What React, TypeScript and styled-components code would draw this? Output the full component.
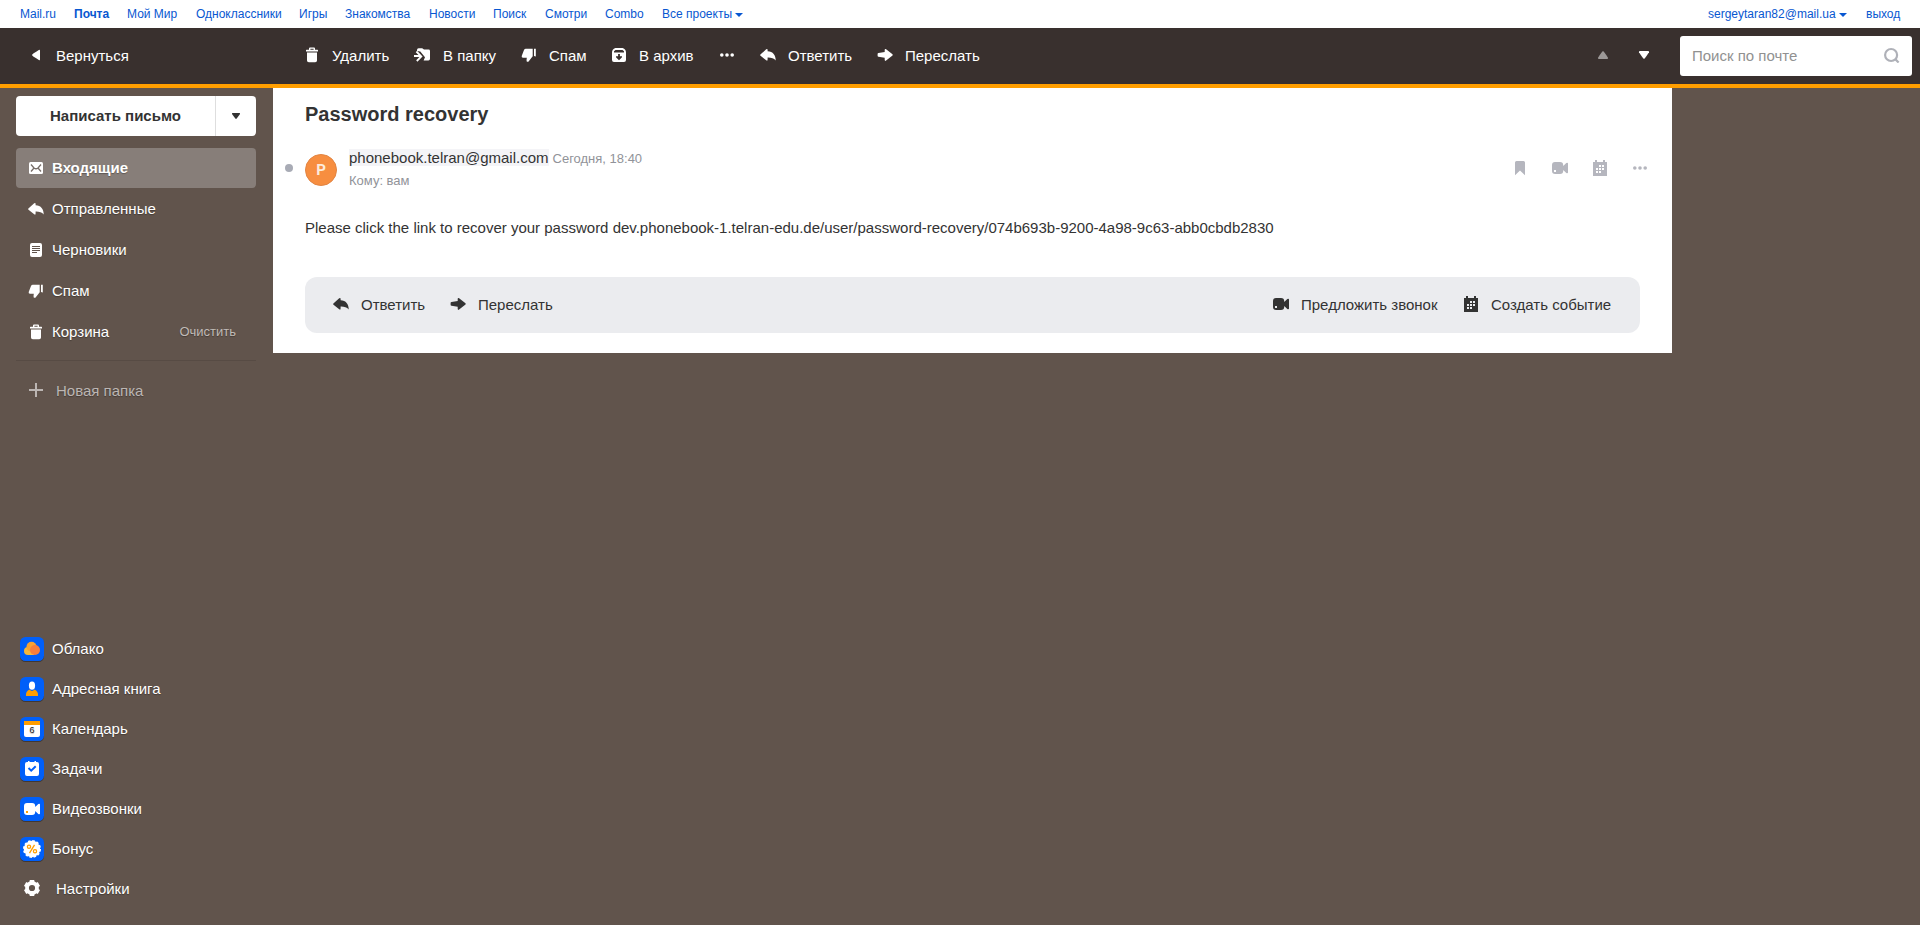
import React from 'react';
import styled, { createGlobalStyle } from 'styled-components';

const Global = createGlobalStyle`
  * { box-sizing: border-box; }
  body {
    margin: 0;
    background: #61544c;
    font-family: "Liberation Sans", Arial, sans-serif;
    font-size: 15px;
    color: #333;
    overflow: hidden;
  }
  svg { display: block; flex: none; }
`;

const Page = styled.div`
  display: flex;
  flex-direction: column;
  height: 925px;
`;

const PortalBar = styled.nav`
  display: flex;
  height: 28px;
  padding: 0 20px;
  background: #fff;
  font-size: 12px;
  line-height: 28px;
  color: #0857d1;
`;

const PortalLink = styled.a<{ $w: number; $bold?: boolean }>`
  display: flex;
  align-items: center;
  width: ${p => p.$w}px;
  flex: none;
  white-space: nowrap;
  font-weight: ${p => (p.$bold ? 700 : 400)};
`;

const Caret = styled.i`
  margin: 2px 0 0 3px;
  border: solid transparent;
  border-width: 4px 4px 0;
  border-top-color: #0857d1;
`;

const Spacer = styled.div`
  flex: 1;
`;

const Toolbar = styled.header`
  display: flex;
  align-items: center;
  height: 60px;
  padding: 0 8px 0 28px;
  background: #39302e;
  border-bottom: 4px solid #ff9e00;
  color: #fff;
`;

const ToolButton = styled.div<{ $w: number; $gap?: number; $dim?: boolean }>`
  display: flex;
  align-items: center;
  gap: ${p => p.$gap ?? 12}px;
  width: ${p => p.$w}px;
  height: 40px;
  padding-bottom: 1px;
  flex: none;
  white-space: nowrap;
  line-height: 17px;
  opacity: ${p => (p.$dim ? 0.5 : 1)};
  svg { margin-top: -1px; }
`;

const Search = styled.div`
  display: flex;
  align-items: center;
  justify-content: space-between;
  width: 232px;
  height: 40px;
  padding: 0 12px 1px;
  border-radius: 3px;
  background: #fff;
  line-height: 17px;
  color: #919191;
  svg { margin-top: -1px; }
`;

const Main = styled.div`
  display: flex;
  flex: 1;
  align-items: stretch;
`;

const Sidebar = styled.aside`
  display: flex;
  flex-direction: column;
  width: 273px;
  padding: 8px 17px 17px 16px;
  color: #fff;
`;

const Label = styled.span<{ $low?: boolean }>`
  margin-top: ${p => (p.$low ? 1 : -1)}px;
  line-height: 17px;
  white-space: nowrap;
`;

const Compose = styled.div`
  display: flex;
  height: 40px;
  margin-bottom: 12px;
  border-radius: 4px;
  background: #fff;
  color: #333;
  font-weight: 700;
`;

const ComposeLabel = styled.div`
  display: flex;
  align-items: center;
  justify-content: center;
  width: 200px;
  border-right: 1px solid #dedede;
`;

const ComposeMore = styled.div`
  display: flex;
  flex: 1;
  align-items: center;
  justify-content: center;
`;

const Folder = styled.div<{ $active?: boolean }>`
  display: flex;
  align-items: center;
  gap: 8px;
  height: 40px;
  margin-bottom: 1px;
  padding: 0 20px 0 12px;
  border-radius: 4px;
  background: ${p => (p.$active ? '#877e79' : 'transparent')};
  font-weight: ${p => (p.$active ? 700 : 400)};
  text-shadow: 0 1px 1px rgba(0, 0, 0, 0.3);
`;

const Clear = styled(Label)`
  margin-left: auto;
  font-size: 13px;
  line-height: 15px;
  color: #c0bbb7;
`;

const Divider = styled.div`
  height: 1px;
  margin: 7px 0 9px;
  background: #574b44;
`;

const NewFolder = styled(Folder)`
  gap: 12px;
  color: #bcb6b3;
`;

const AppLink = styled.div<{ $gap?: number }>`
  display: flex;
  align-items: center;
  gap: ${p => p.$gap ?? 8}px;
  height: 40px;
  padding-left: 4px;
  text-shadow: 0 1px 1px rgba(0, 0, 0, 0.3);
`;

const TileSvg = styled.svg`
  margin-top: 3px;
`;

const Letter = styled.article`
  display: flex;
  flex-direction: column;
  width: 1399px;
  height: 265px;
  padding: 14px 32px 20px;
  background: #fff;
`;

const Subject = styled.h1`
  margin: 0;
  font-size: 20px;
  line-height: 24px;
`;

const LetterHead = styled.div`
  display: flex;
  height: 62px;
  margin: 16px 0 0 -20px;
`;

const Unread = styled.i`
  width: 8px;
  height: 8px;
  margin: 22px 12px 0 0;
  border-radius: 50%;
  background: #a8abb5;
`;

const Avatar = styled.div`
  display: flex;
  align-items: center;
  justify-content: center;
  width: 32px;
  height: 32px;
  margin: 12px 12px 0 0;
  border: 1px solid #e28543;
  border-radius: 50%;
  background: #f78e40;
  color: #fdebdc;
  font: 700 15px Roboto, "Liberation Sans", sans-serif;
`;

const Meta = styled.div`
  padding-top: 6px;
  font-size: 13px;
  line-height: 20px;
  color: #919399;
  white-space: nowrap;
`;

const Sender = styled.span`
  margin-right: 4px;
  background: #f4f4f7;
  font-size: 15px;
  color: #333;
`;

const Recipient = styled.div`
  margin-top: 2px;
`;

const LetterActions = styled.div`
  display: flex;
  gap: 24px;
  margin: 18px -8px 0 auto;
  height: 16px;
  color: #b5b6be;
`;

const LetterText = styled.p`
  margin: 13px 0 38px;
  line-height: 22px;
`;

const ReplyBar = styled.footer`
  display: flex;
  align-items: center;
  height: 56px;
  flex: none;
  padding: 0 28px;
  border-radius: 12px;
  background: #ebecef;
`;

const Icon = ({ children }: { children: React.ReactNode }) => (
  <svg width="16" height="16" viewBox="0 0 16 16" fill="currentColor">{children}</svg>
);

const TrashIcon = () => (
  <Icon>
    <path d="M2 3.3Q2 2.8 2.5 2.8H5V1.6Q5 .5 6 .5H10Q11 .5 11 1.6V2.8H13.5Q14 2.8 14 3.3V4.6H2ZM6.4 2.8H9.6V1.8H6.4ZM3 5.4H13V13.5Q13 15.3 11.2 15.3H4.8Q3 15.3 3 13.5Z" />
  </Icon>
);
const ReplyIcon = () => (
  <Icon>
    <path d="M.4 7.6 6.2 2.3Q7.6 1.3 7.6 3V4.3C13 4.6 15.7 8 15.7 13.6 13.8 11.2 11 10.5 7.6 10.6V12.6Q7.6 14.4 6.2 13.2L.5 8.8Q-.1 8.2.4 7.6Z" />
  </Icon>
);
const ForwardIcon = () => (
  <Icon>
    <path d="M.6 7Q.6 6.1 1.5 6L7.7 5V3Q7.7 1.3 9.1 2.3L15.5 7.3Q16 7.9 15.5 8.6L9.1 13.6Q7.7 14.6 7.7 12.8V10.8L1.5 9.8Q.6 9.7.6 8.8Z" />
  </Icon>
);
const MoveIcon = () => (
  <Icon>
    <path d="M3 4V3Q3 1.2 4.6 1.2H8.2L10 2.6H14.6Q16 2.6 16 4V11.8Q16 13.4 14.4 13.4H9.6L11 10.2 6.3 4.5Z" />
    <path d="M0 9H6M2.4 4.5 7.3 9.5 2.8 14" fill="none" stroke="currentColor" strokeWidth="1.8" />
  </Icon>
);
const SpamIcon = () => (
  <Icon>
    <path d="M4.8 1.8H11.7V9.3L7.8 14.2Q7 15.2 5.7 14.4 5.4 13 5.8 10.7H2Q.3 10.6.7 8.9L2.9 3.2Q3.5 1.8 4.8 1.8ZM13 1.8H14.8V9.5L13 9Z" />
  </Icon>
);
const ArchiveIcon = () => (
  <Icon>
    <path fillRule="evenodd" d="M4.4 1H11.6Q15 2.4 15 5.5V13Q15 15 13 15H3Q1 15 1 13V5.5Q1 2.4 4.4 1ZM3 4.3V5.5H13V4.3L11.5 3.1H4.5ZM7.1 7.1V9.2H5V10.2L8 13.2 11 10.2V9.2H8.9V7.1Z" />
  </Icon>
);
const DotsIcon = () => (
  <Icon>
    <circle cx="2.8" cy="8" r="1.8" /><circle cx="8" cy="8" r="1.8" /><circle cx="13.2" cy="8" r="1.8" />
  </Icon>
);
const InboxIcon = () => (
  <Icon>
    <rect x="1" y="2" width="14" height="12" rx="1.5" />
    <path d="M3 4.5 6 8Q8 9.5 10 8L13 4.5M3 11.5 6 8M13 11.5 10 8" fill="none" stroke="#776e69" strokeWidth="1.3" />
  </Icon>
);
const DraftIcon = () => (
  <Icon>
    <path fillRule="evenodd" d="M4 1H12Q14 1 14 3V13Q14 15 12 15H4Q2 15 2 13V3Q2 1 4 1ZM4 4V5H12V4ZM4 6V7H12V6ZM4 8V9H12V8ZM4 10V11H9V10Z" />
  </Icon>
);
const PlusIcon = () => <Icon><path d="M7 1H9V7H15V9H9V15H7V9H1V7H7Z" /></Icon>;
const BookmarkIcon = () => <Icon><path d="M3 2.5Q3 1 4.5 1H11.5Q13 1 13 2.5V15.3L8 10.6 3 15.3Z" /></Icon>;
const VideoIcon = () => (
  <Icon>
    <path fillRule="evenodd" d="M3 2H8Q11.2 2 11.2 5.2V6L14.3 2.9Q16 2.3 16 3.5V12.5Q16 13.7 14.3 13.1L11.2 10V11Q11.2 14 8 14H3.2Q0 14 0 10.8V5Q0 2 3 2ZM2 10V12H4V10Z" />
  </Icon>
);
const CalendarIcon = () => (
  <Icon>
    <path fillRule="evenodd" d="M1 2H3V0H5V2H11V0H13V2H15V16H1ZM7 5V7H9V5ZM10 5V7H12V5ZM4 8V10H6V8ZM7 8V10H9V8ZM10 8V10H12V8ZM4 11V13H6V11ZM7 11V13H9V11Z" />
  </Icon>
);
const SearchIcon = () => (
  <Icon>
    <g fill="none" stroke="#afb1b8" strokeWidth="2.2"><circle cx="7.1" cy="8" r="6" /><path d="m11 11.9 3.6 3.6" /></g>
  </Icon>
);
const BackIcon = () => <Icon><path d="M3.9 8Q3.9 7.2 10.8 3 12 2.4 12 3.5V12.5Q12 13.6 10.8 13 3.9 8.8 3.9 8Z" /></Icon>;
const UpIcon = () => <Icon><path d="M8 4Q8.7 4 13 10.7 13.3 12 12 12H4Q2.7 12 3 10.7 7.3 4 8 4Z" /></Icon>;
const DownIcon = () => <Icon><path d="M8 12Q8.7 12 13 5.3 13.3 4 12 4H4Q2.7 4 3 5.3 7.3 12 8 12Z" /></Icon>;
const SmallDownIcon = () => <Icon><path d="M8 11Q8.5 11 12 6 12.3 5 11.4 5H4.6Q3.7 5 4 6 7.5 11 8 11Z" /></Icon>;

const Tile = ({ children }: { children: React.ReactNode }) => (
  <TileSvg width="24" height="25" viewBox="0 0 24 25">
    <rect y="1" width="24" height="24" rx="5.5" fill="#413833" />
    <rect width="24" height="24" rx="5.5" fill="#005ff9" />
    {children}
  </TileSvg>
);

const apps = [
  ['Облако', <>
    <circle cx="8" cy="14" r="4" fill="#f5b73b" /><rect x="8" y="11" width="6" height="7" fill="#f5b73b" />
    <circle cx="11.5" cy="9.7" r="5" fill="#f7a233" /><circle cx="15" cy="13" r="5" fill="#f77e3b" />
  </>],
  ['Адресная книга', <>
    <ellipse cx="12" cy="8.7" rx="3.1" ry="4.1" fill="#fff" /><path d="M6 19V17.4Q6 14.5 9.4 12.6 12 15.4 14.6 12.6 18 14.5 18 17.4V19Z" fill="#ff9e00" />
  </>],
  ['Календарь', <>
    <path d="M4 8H20V18Q20 20 18 20H6Q4 20 4 18Z" fill="#fff" /><path d="M4 4H20V8H4Z" fill="#ff9e00" />
    <text x="12" y="16" textAnchor="middle" fontSize="9" fill="#222">6</text>
  </>],
  ['Задачи', <>
    <path d="M7 5H8V4H9.5V5H14.5V4H16V5H17Q19 5 19 7V17Q19 19 17 19H7Q5 19 5 17V7Q5 5 7 5Z" fill="#fff" />
    <path d="m8.5 11 2.7 2.6 4.5-4.3" fill="none" stroke="#005ff9" strokeWidth="2" />
  </>],
  ['Видеозвонки', <>
    <path d="M7 6H12Q15.2 6 15.2 9V10L18.3 6.9Q20 6.3 20 7.5V16.5Q20 17.7 18.3 17.1L15.2 14V15Q15.2 18 12 18H7.2Q4 18 4 14.8V9Q4 6 7 6Z" fill="#fff" />
    <rect x="6" y="14" width="2" height="2" fill="#ff9e00" />
  </>],
  ['Бонус', <>
    <circle cx="12" cy="12" r="8.2" fill="#fff" /><circle cx="12" cy="12" r="8" fill="none" stroke="#fff" strokeWidth="2" strokeDasharray="2.5 1.689" />
    <g fill="none" stroke="#ff9e00" strokeWidth="1.3"><circle cx="9" cy="9.7" r="1.6" /><circle cx="15" cy="14.3" r="1.6" /><path d="m14.5 7.8-5 8.4" /></g>
  </>],
] as [string, React.ReactNode][];

const GearIcon = () => (
  <svg width="24" height="24" viewBox="0 0 24 24">
    <g fill="none" stroke="#fff"><circle cx="12" cy="12" r="5" strokeWidth="3.8" />
      <path d="M12 4V7M12 17V20M5.1 8 7.7 9.5M16.3 14.5 18.9 16M5.1 16 7.7 14.5M16.3 9.5 18.9 8" strokeWidth="4.6" /></g>
  </svg>
);

const portal: [string, number][] = [
  ['Mail.ru', 54], ['Почта', 53], ['Мой Мир', 69], ['Одноклассники', 103], ['Игры', 46], ['Знакомства', 84],
  ['Новости', 64], ['Поиск', 52], ['Смотри', 60], ['Combo', 57],
];

export default function App() {
  return (
    <Page>
      <Global />
      <PortalBar>
        {portal.map(([t, w]) => <PortalLink key={t} $w={w} $bold={t === 'Почта'}>{t}</PortalLink>)}
        <PortalLink $w={90}>Все проекты<Caret /></PortalLink>
        <Spacer />
        <PortalLink $w={158}>sergeytaran82@mail.ua<Caret /></PortalLink>
        <PortalLink $w={34}>выход</PortalLink>
      </PortalBar>
      <Toolbar>
        <ToolButton $w={276}><BackIcon />Вернуться</ToolButton>
        <ToolButton $w={110}><TrashIcon />Удалить</ToolButton>
        <ToolButton $w={107} $gap={13}><MoveIcon />В папку</ToolButton>
        <ToolButton $w={90}><SpamIcon />Спам</ToolButton>
        <ToolButton $w={108}><ArchiveIcon />В архив</ToolButton>
        <ToolButton $w={41}><DotsIcon /></ToolButton>
        <ToolButton $w={117}><ReplyIcon />Ответить</ToolButton>
        <ToolButton $w={110}><ForwardIcon />Переслать</ToolButton>
        <Spacer />
        <ToolButton $w={41} $dim><UpIcon /></ToolButton>
        <ToolButton $w={44}><DownIcon /></ToolButton>
        <Search>Поиск по почте<SearchIcon /></Search>
      </Toolbar>
      <Main>
        <Sidebar>
          <Compose>
            <ComposeLabel><Label>Написать письмо</Label></ComposeLabel>
            <ComposeMore><SmallDownIcon /></ComposeMore>
          </Compose>
          <Folder $active><InboxIcon /><Label>Входящие</Label></Folder>
          <Folder><ReplyIcon /><Label>Отправленные</Label></Folder>
          <Folder><DraftIcon /><Label>Черновики</Label></Folder>
          <Folder><SpamIcon /><Label>Спам</Label></Folder>
          <Folder><TrashIcon /><Label>Корзина</Label><Clear>Очистить</Clear></Folder>
          <Divider />
          <NewFolder><PlusIcon /><Label $low>Новая папка</Label></NewFolder>
          <Spacer />
          {apps.map(([name, art]) => <AppLink key={name}><Tile>{art}</Tile><Label $low>{name}</Label></AppLink>)}
          <AppLink $gap={12}><GearIcon /><Label $low>Настройки</Label></AppLink>
        </Sidebar>
        <Letter>
          <Subject>Password recovery</Subject>
          <LetterHead>
            <Unread />
            <Avatar>P</Avatar>
            <Meta>
              <Sender>phonebook.telran@gmail.com</Sender>Сегодня, 18:40
              <Recipient>Кому: вам</Recipient>
            </Meta>
            <LetterActions><BookmarkIcon /><VideoIcon /><CalendarIcon /><DotsIcon /></LetterActions>
          </LetterHead>
          <LetterText>Please click the link to recover your password dev.phonebook-1.telran-edu.de/user/password-recovery/074b693b-9200-4a98-9c63-abb0cbdb2830</LetterText>
          <ReplyBar>
            <ToolButton $w={117}><ReplyIcon />Ответить</ToolButton>
            <ToolButton $w={110}><ForwardIcon />Переслать</ToolButton>
            <Spacer />
            <ToolButton $w={190}><VideoIcon />Предложить звонок</ToolButton>
            <ToolButton $w={149}><CalendarIcon />Создать событие</ToolButton>
          </ReplyBar>
        </Letter>
      </Main>
    </Page>
  );
}
